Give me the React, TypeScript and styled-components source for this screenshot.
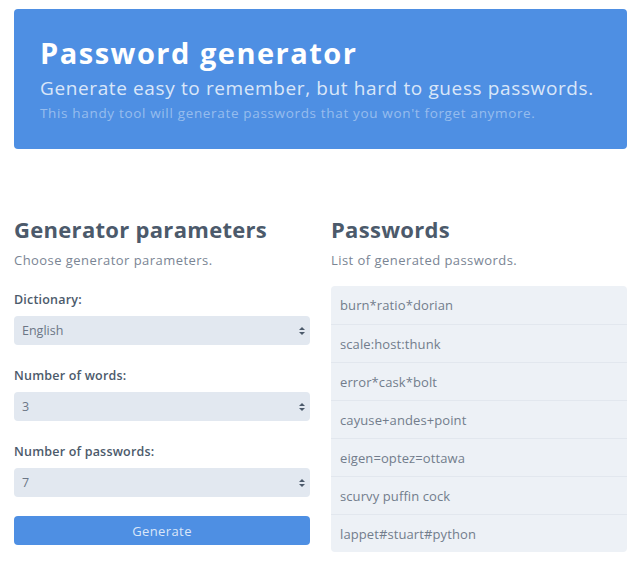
import React from "react";
import styled, { createGlobalStyle } from "styled-components";

const Global = createGlobalStyle`
  html, body { margin: 0; padding: 0; background: #ffffff; }
  body { font-family: "Open Sans", "Noto Sans", sans-serif; }
  * { box-sizing: border-box; }
`;

const Page = styled.div`
  padding: 9px 13px 0 14px;
  width: 640px;
`;

const Hero = styled.header`
  background: #4e8fe3;
  border-radius: 4px;
  height: 140px;
  padding: 25px 26px 0 26px;
  display: flex;
  flex-direction: column;
`;

const HeroTitle = styled.h1`
  margin: 0;
  font-size: 29px;
  line-height: 38px;
  font-weight: 700;
  color: #ffffff;
  letter-spacing: 1.5px;
`;

const HeroLead = styled.p`
  margin: 3px 0 0 0;
  font-size: 19px;
  line-height: 26px;
  color: rgba(255, 255, 255, 0.8);
  font-weight: 400;
  letter-spacing: 0.62px;
`;

const HeroNote = styled.p`
  margin: 3px 0 0 0;
  font-size: 13.5px;
  line-height: 18px;
  color: rgba(255, 255, 255, 0.42);
  letter-spacing: 0.66px;
`;

const Columns = styled.main`
  display: grid;
  grid-template-columns: 296px 296px;
  column-gap: 21px;
  margin-top: 65px;
`;

const Column = styled.section`
  display: flex;
  flex-direction: column;
`;

const SectionTitle = styled.h2`
  margin: 0;
  font-size: 22px;
  line-height: 30px;
  font-weight: 700;
  color: #4c5a6b;
  letter-spacing: 0.3px;
`;

const SectionLead = styled.p`
  margin: 7px 0 0 0;
  font-size: 13px;
  line-height: 18px;
  color: #7a8594;
  letter-spacing: 0.45px;
`;

const Field = styled.div<{ $first?: boolean }>`
  display: flex;
  flex-direction: column;
  margin-top: ${(p) => (p.$first ? "23px" : "23px")};
`;

const Label = styled.label`
  font-size: 12.5px;
  line-height: 16px;
  font-weight: 600;
  color: #4c5a6b;
  margin-bottom: 8px;
  letter-spacing: 0.2px;
`;

const SelectBox = styled.div`
  position: relative;
  height: 29px;
  background: #e2e8f0;
  border-radius: 4px;
  display: flex;
  align-items: center;
  padding: 0 8px;
  font-size: 12.5px;
  color: #6b7686;
`;

const Arrows = styled.svg`
  position: absolute;
  right: 4px;
  top: 10px;
`;

const Button = styled.button`
  margin-top: 19px;
  height: 29px;
  border: none;
  border-radius: 4px;
  background: #4e8fe3;
  color: rgba(255, 255, 255, 0.8);
  font-family: inherit;
  font-size: 13px;
  letter-spacing: 0.4px;
  padding: 0;
  cursor: pointer;
`;

const List = styled.ul`
  list-style: none;
  margin: 17px 0 0 0;
  padding: 0;
  background: #edf1f6;
  border-radius: 4px;
`;

const Item = styled.li<{ $first?: boolean }>`
  height: 38px;
  display: flex;
  align-items: center;
  padding: 0 9px;
  font-size: 13px;
  color: #727d8c;
  letter-spacing: 0.1px;
  border-top: ${(p) => (p.$first ? "none" : "1px solid #e2e7ee")};
`;

const SortArrows = () => (
  <Arrows width="8" height="10" viewBox="0 0 8 10">
    <path d="M4 1 L7 4 L1 4 Z" fill="#4c5a6b" />
    <path d="M4 9 L7 6 L1 6 Z" fill="#4c5a6b" />
  </Arrows>
);

const passwords = [
  "burn*ratio*dorian",
  "scale:host:thunk",
  "error*cask*bolt",
  "cayuse+andes+point",
  "eigen=optez=ottawa",
  "scurvy puffin cock",
  "lappet#stuart#python",
];

const fields = [
  { label: "Dictionary:", value: "English" },
  { label: "Number of words:", value: "3" },
  { label: "Number of passwords:", value: "7" },
];

export default function App() {
  return (
    <>
      <Global />
      <Page>
        <Hero>
          <HeroTitle>Password generator</HeroTitle>
          <HeroLead>Generate easy to remember, but hard to guess passwords.</HeroLead>
          <HeroNote>This handy tool will generate passwords that you won't forget anymore.</HeroNote>
        </Hero>
        <Columns>
          <Column>
            <SectionTitle>Generator parameters</SectionTitle>
            <SectionLead>Choose generator parameters.</SectionLead>
            {fields.map((f, i) => (
              <Field key={f.label} $first={i === 0}>
                <Label>{f.label}</Label>
                <SelectBox>
                  {f.value}
                  <SortArrows />
                </SelectBox>
              </Field>
            ))}
            <Button>Generate</Button>
          </Column>
          <Column>
            <SectionTitle>Passwords</SectionTitle>
            <SectionLead>List of generated passwords.</SectionLead>
            <List>
              {passwords.map((p, i) => (
                <Item key={p} $first={i === 0}>
                  {p}
                </Item>
              ))}
            </List>
          </Column>
        </Columns>
      </Page>
    </>
  );
}
